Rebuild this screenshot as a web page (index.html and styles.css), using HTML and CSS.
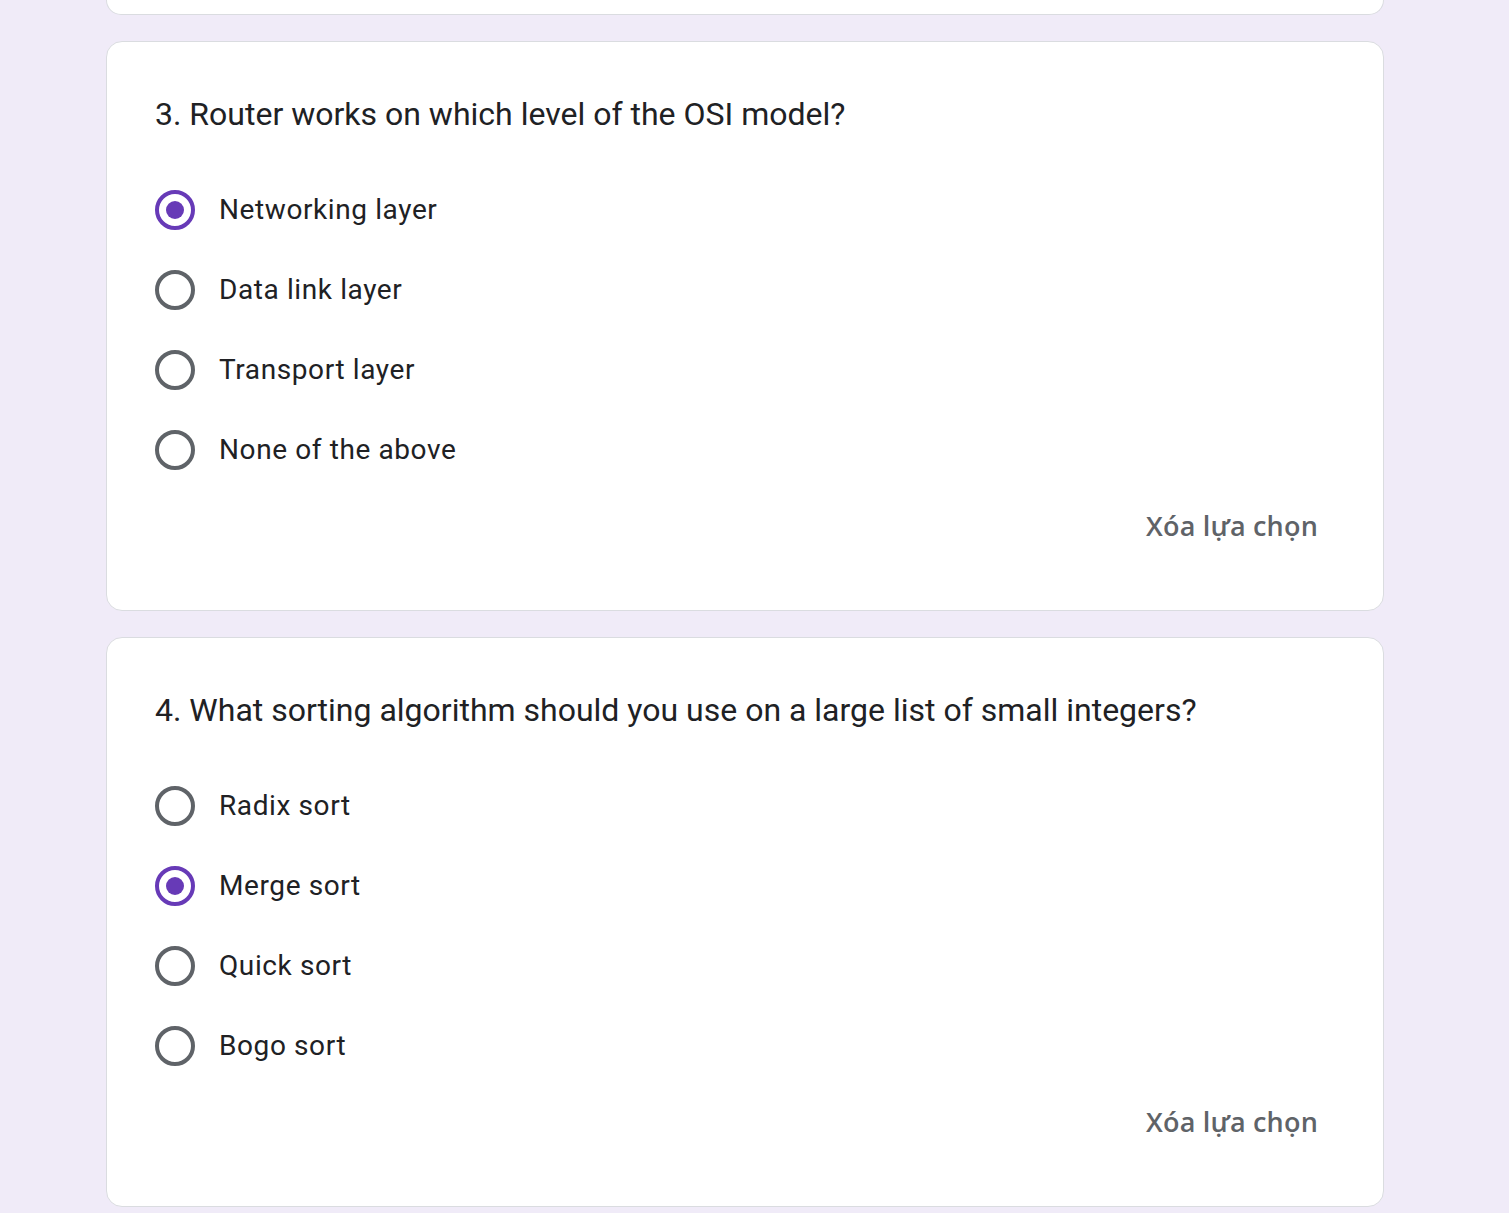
FILE: index.html
```html
<!DOCTYPE html>
<html lang="vi">
<head>
<meta charset="utf-8">
<link rel="stylesheet" href="styles.css">
<title>Form</title>
</head>
<body>
<main class="page">
  <div class="card card-stub"></div>

  <section class="card">
    <div class="question">3. Router works on which level of the OSI model?</div>
    <div class="options">
      <label class="option"><span class="radio checked"></span><span class="opt-text">Networking layer</span></label>
      <label class="option"><span class="radio"></span><span class="opt-text">Data link layer</span></label>
      <label class="option"><span class="radio"></span><span class="opt-text">Transport layer</span></label>
      <label class="option"><span class="radio"></span><span class="opt-text">None of the above</span></label>
    </div>
    <div class="actions"><span class="clear">Xóa lựa chọn</span></div>
  </section>

  <section class="card">
    <div class="question">4. What sorting algorithm should you use on a large list of small integers?</div>
    <div class="options">
      <label class="option"><span class="radio"></span><span class="opt-text">Radix sort</span></label>
      <label class="option"><span class="radio checked"></span><span class="opt-text">Merge sort</span></label>
      <label class="option"><span class="radio"></span><span class="opt-text">Quick sort</span></label>
      <label class="option"><span class="radio"></span><span class="opt-text">Bogo sort</span></label>
    </div>
    <div class="actions"><span class="clear">Xóa lựa chọn</span></div>
  </section>
</main>
</body>
</html>
```

FILE: styles.css
```css
html, body {
  margin: 0;
  padding: 0;
  background: #f0ebf8;
}
body {
  font-family: Roboto, "Liberation Sans", Arial, sans-serif;
  color: #202124;
  height: 1213px;
  overflow: hidden;
}
.page {
  width: 1278px;
  margin-left: 106px;
  display: flex;
  flex-direction: column;
  gap: 26px;
}
.card {
  box-sizing: border-box;
  background: #fff;
  border: 1px solid #dadce0;
  border-radius: 16px;
  padding: 48px 48px 48px 48px;
}
.card-stub {
  height: 15px;
  padding: 0;
  border-top: none;
  border-top-left-radius: 0;
  border-top-right-radius: 0;
}
.question {
  font-size: 32px;
  line-height: 48px;
  letter-spacing: 0;
  font-weight: 400;
}
.options {
  margin-top: 32px;
  display: flex;
  flex-direction: column;
}
.option {
  height: 80px;
  display: flex;
  align-items: center;
}
.radio {
  box-sizing: border-box;
  width: 40px;
  height: 40px;
  border: 4px solid #5f6368;
  border-radius: 50%;
  display: flex;
  align-items: center;
  justify-content: center;
  flex-shrink: 0;
}
.radio.checked {
  border-color: #673ab7;
}
.radio.checked::after {
  content: "";
  width: 18px;
  height: 18px;
  border-radius: 50%;
  background: #673ab7;
}
.opt-text {
  margin-left: 24px;
  font-size: 28px;
  line-height: 40px;
  letter-spacing: 0.6px;
}
.actions {
  height: 72px;
  display: flex;
  justify-content: flex-end;
  align-items: center;
}
.clear {
  padding: 0 17px;
  font-family: "Open Sans", "Noto Sans", sans-serif;
  font-size: 27px;
  font-weight: 600;
  color: #5f6368;
  letter-spacing: 0.2px;
  transform: translateY(-1px);
}
```
